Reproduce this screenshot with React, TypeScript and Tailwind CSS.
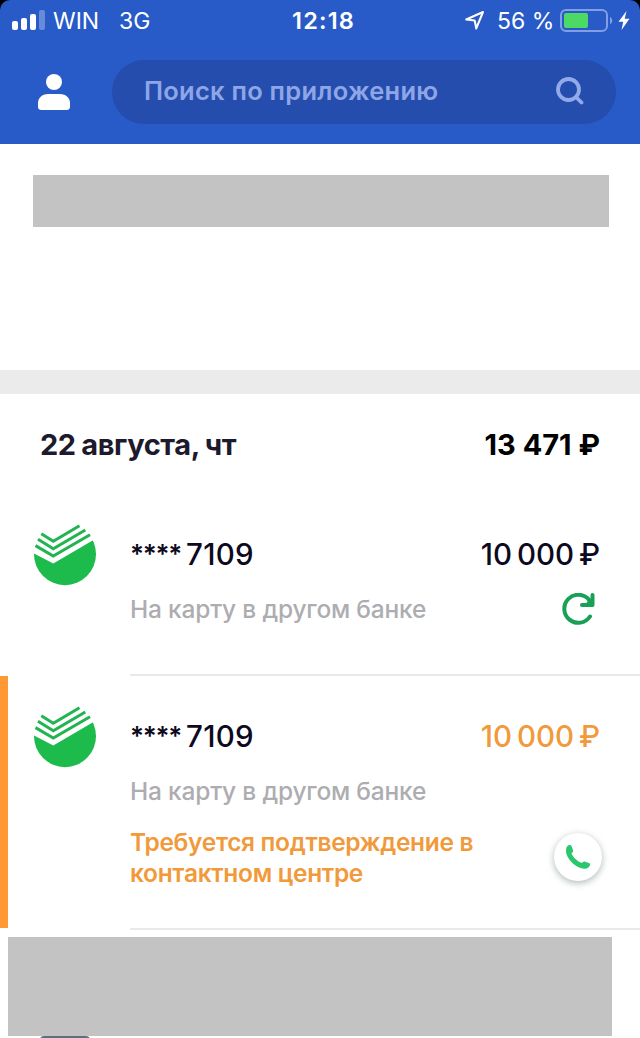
type Operation = {
    id: number;
    card: string;
    description: string;
    amount: string;
    warning?: string;
};

const operations: Operation[] = [
    { id: 1, card: '7109', description: 'На карту в другом банке', amount: '10 000 ₽' },
    { id: 2, card: '7109', description: 'На карту в другом банке', amount: '10 000 ₽', warning: 'Требуется подтверждение в контактном центре' },
];

function StatusBar() {
    return (
        <div className="flex h-10 items-center text-[23px] whitespace-nowrap text-white">
            <svg className="ml-3 h-5 w-[33px] shrink-0" viewBox="0 0 33 20" fill="#fff">
                <rect x="0" y="11" width="6" height="9" rx="2" />
                <rect x="9" y="8" width="6" height="12" rx="2" />
                <rect x="18" y="4" width="6" height="16" rx="2" />
                <rect x="27" y="0" width="6" height="20" rx="2" opacity="0.3" />
            </svg>
            <span className="ml-2 w-[66px] pt-0.5">WIN</span>
            <span className="w-[173px] pt-0.5">3G</span>
            <span className="w-[173px] pt-0.5 text-[23.5px] font-semibold tracking-[1.2px]">12:18</span>
            <svg className="h-5 w-5 shrink-0" viewBox="0 0 20 20" fill="none" stroke="#fff" strokeWidth="2" strokeLinejoin="round">
                <path d="M1.2 9.5 18 2 11.2 18.500 9.700 10.500z" />
            </svg>
            <span className="ml-3 w-[62px] pt-0.5">56 %</span>
            <svg className="ml-px h-[23px] w-[72px] shrink-0" viewBox="0 0 72 23">
                <rect x="1" y="1" width="46" height="21" rx="5" fill="none" stroke="#829fe3" strokeWidth="2" />
                <rect x="4" y="4" width="24" height="15" rx="2" fill="#4cd964" />
                <path d="M50 8c3 1 3 6 0 7z" fill="#829fe3" />
                <path d="M66.5 2 58.5 12.8h4.7L61.5 21l8-11.3h-4.8z" fill="#fff" />
            </svg>
        </div>
    );
}

function SearchBar() {
    return (
        <div className="flex h-[104px] items-center pr-6 pl-[38px]">
            <svg className="h-9 w-8 shrink-0" viewBox="0 0 32 36" fill="#fff">
                <circle cx="16" cy="8" r="8" />
                <path d="M10 20h12c6 0 10 4 10 9v3c0 3-1 4-4 4H4c-3 0-4-1-4-4v-3c0-5 4-9 10-9z" />
            </svg>
            <div className="ml-[42px] flex h-16 flex-1 items-center justify-between rounded-full bg-[#244dae] pr-8 pb-0.5 pl-8">
                <span className="text-[25.5px] font-semibold tracking-[0.25px] text-[#8ea6e6]">Поиск по приложению</span>
                <svg className="h-7 w-7" viewBox="0 0 28 28" fill="none" stroke="#92aaea" strokeWidth="3.8" strokeLinecap="round">
                    <circle cx="12.5" cy="12.5" r="10.5" />
                    <path d="m20.5 20.5 5 5" />
                </svg>
            </div>
        </div>
    );
}

function BankLogo() {
    return (
        <svg className="h-[62px] w-[62px]" viewBox="0 0 62 62">
            <clipPath id="logo-body">
                <path d="M-1 29 19.3 39.500 63 14V62H-1z" />
            </clipPath>
            <circle cx="31" cy="30.2" r="31" fill="#1cbb4b" clipPath="url(#logo-body)" />
            <g fill="none" stroke="#21b450" strokeWidth="3">
                <path d="m7.3 9.7 12 7.5L45.5 1.8" />
                <path d="m4 15.3 15.3 9.500L51.3 6" />
                <path d="m1.5 21.600 17.800 10.400L56 10.800" />
            </g>
        </svg>
    );
}

function RepeatIcon() {
    return (
        <svg className="h-8 w-[33px]" viewBox="0 0 33 32" fill="none" stroke="#18a156" strokeWidth="4" strokeLinecap="round" strokeLinejoin="round">
            <path d="M28 23.5A14 14 0 1 1 27.2 7" />
            <path d="M30.5 2v10H20" />
            <path d="m29 7.5-3 3.5" />
        </svg>
    );
}

function CallButton() {
    return (
        <button className="flex h-12 w-12 items-center justify-center rounded-full bg-white shadow-[0_2px_7px_rgba(50,80,75,0.4)]">
            <svg className="h-6 w-6" viewBox="0 0 24 24" fill="#2ac76c">
                <path d="M.2 4C.5 1.500 2 .1 3.800 0c.8 0 1.500.5 1.800 1.300L7 5c.4 1 .2 1.800-.6 2.400l-1 .8C7 12 11.500 16.500 15.800 18l1.100-.9c.7-.6 1.400-.7 2.200-.4l3.900 1.400c.9.4 1.200 1 1 1.900C23.300 22.600 21 24 18 23.800 8.500 22.500 0 13 0 6z" />
            </svg>
        </button>
    );
}

function OperationRow({ operation }: { operation: Operation }) {
    const { card, description, amount, warning } = operation;

    return (
        <div className={`flex ${warning ? 'h-[254px]' : 'h-[182px]'}`}>
            <div className={`w-2 ${warning ? 'mb-0.5 bg-[#ff9933]' : ''}`}></div>
            <div className="w-[122px] pt-[30px] pl-[26px]">
                <BankLogo />
            </div>
            <div className="flex-1 border-b-2 border-[#e9e9e9] pt-[42px] pr-10">
                <div className="flex justify-between text-[29.5px] leading-9 font-medium text-[#0d0920]">
                    <span className="flex">
                        <span className="w-14 text-[26px] leading-[35px] font-semibold tracking-[-1.3px]">****</span>
                        <span className="tracking-[0.3px]">{card}</span>
                    </span>
                    <span className={`[word-spacing:-3px] ${warning ? 'text-[#f19a3c]' : ''}`}>{amount}</span>
                </div>
                <div className="mt-[17px] flex h-10 items-center justify-between">
                    <span className="text-[24.5px] font-medium tracking-[-0.2px] text-[#adadb1]">{description}</span>
                    {!warning && <div className="mr-[5px]"><RepeatIcon /></div>}
                </div>
                {warning && (
                    <div className="mt-4 -mr-[2px] flex justify-between">
                        <p className="w-[360px] text-[24.5px] leading-[31px] font-semibold tracking-[-0.32px] text-[#f19a3c]">{warning}</p>
                        <div className="pt-1.5">
                            <CallButton />
                        </div>
                    </div>
                )}
            </div>
        </div>
    );
}

export default function App() {
    return (
        <div className="h-[1038px] w-[640px] overflow-hidden bg-white font-['Inter','Liberation_Sans',sans-serif]">
            <header className="bg-black">
                <div className="h-36 rounded-t-[10px] bg-[#285ac8]">
                    <StatusBar />
                    <SearchBar />
                </div>
            </header>

            <section className="h-[226px] pt-[31px] pl-[33px]">
                <div className="h-[52px] w-[576px] bg-[#c3c3c3]"></div>
            </section>

            <div className="h-6 bg-[#ebebeb]"></div>

            <div className="flex h-[100px] justify-between px-10 pt-8 text-[29px] leading-[38px] font-bold">
                <h2 className="tracking-[-0.4px] text-[#1c1a2c] [word-spacing:-1px]">22 августа, чт</h2>
                <span className="text-black">13 471 ₽</span>
            </div>

            {operations.map((operation) => (
                <OperationRow key={operation.id} operation={operation} />
            ))}

            <div className="mt-[7px] ml-2 h-[99px] w-[604px] bg-[#c3c3c3]"></div>
            <div className="ml-10 h-1 w-[50px] rounded-t-sm bg-[#5b7180]"></div>
        </div>
    );
}
